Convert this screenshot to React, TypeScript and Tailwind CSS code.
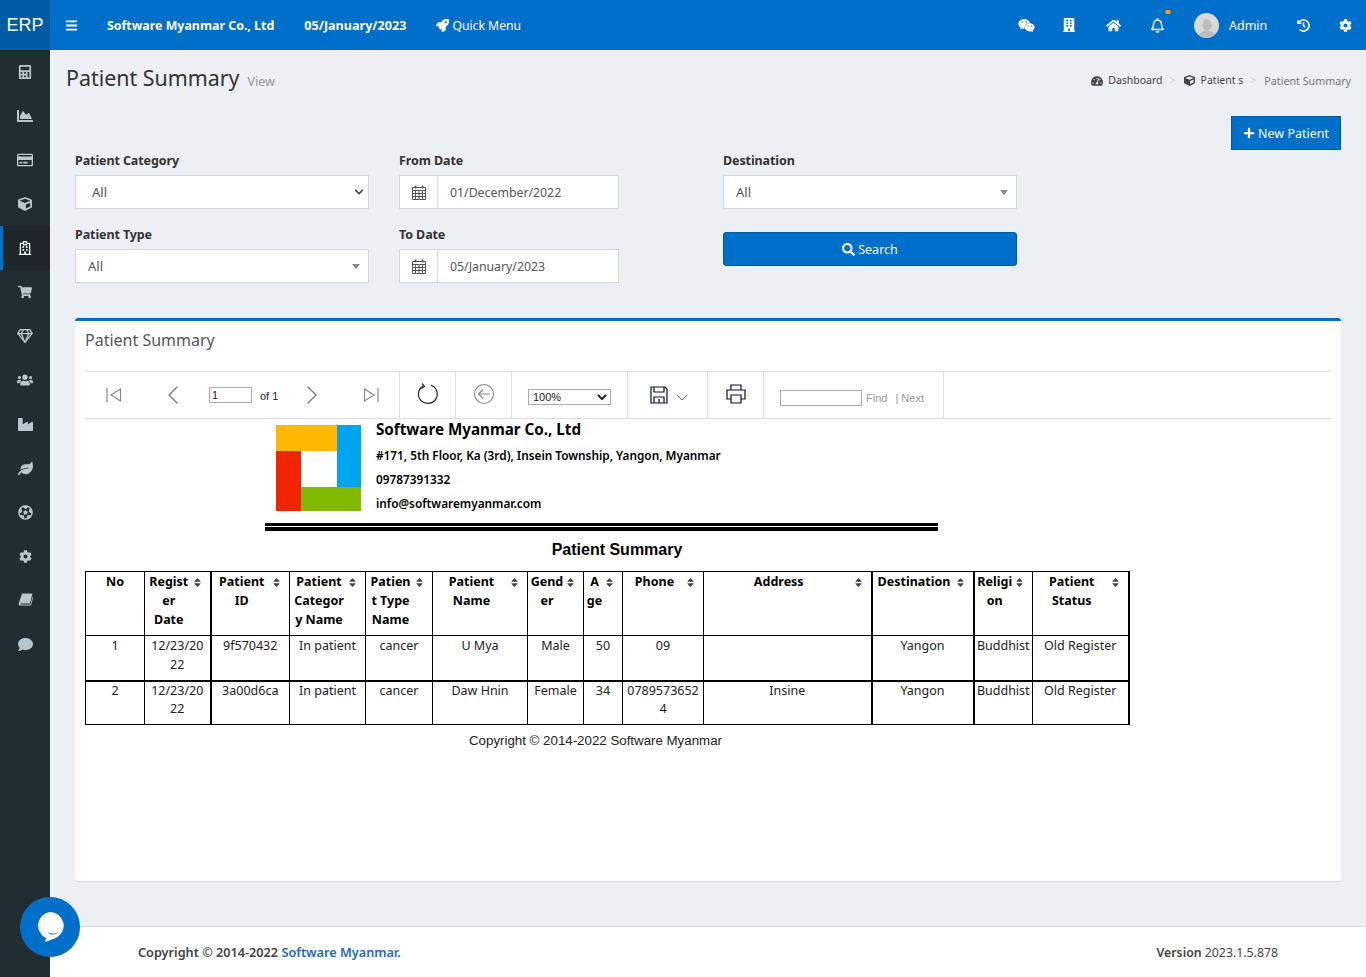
import {
  FaBars,
  FaBuilding,
  FaCalculator,
  FaChartArea,
  FaChevronDown,
  FaCog,
  FaComment,
  FaCube,
  FaFutbol,
  FaHistory,
  FaHome,
  FaIndustry,
  FaLeaf,
  FaPlus,
  FaRegBell,
  FaRegCreditCard,
  FaRegGem,
  FaRegHospital,
  FaRocket,
  FaSearch,
  FaShoppingCart,
  FaSort,
  FaTachometerAlt,
  FaUsers,
  FaWeixin,
} from "react-icons/fa";
import type { ReactNode } from "react";

function BookIcon() {
  return (
    <svg width="15" height="14" viewBox="0 0 15 14" fill="currentColor">
      <path d="M4 0.500h10.500l-2.600 10H3c-.8 0-1 .9-.3 1h9.700l2-7.500.6.600-2 8H2.500C1 12.600.3 11.500.8 10.200z" />
    </svg>
  );
}

function CalendarIcon() {
  return (
    <svg width="14" height="15" viewBox="0 0 14 15" fill="none" stroke="#555" strokeWidth="1">
      <path d="M.5 2.500h13v12H.5zM.5 5.500h13M.5 8.500h13M.5 11.500h13M3.500 5.500v9M7 5.500v9M10.500 5.500v9" />
      <path d="M3.500 .5v3M10.500 .5v3" strokeWidth="1.600" />
    </svg>
  );
}

const sideIcons = [
  { icon: <FaCalculator size={14} /> },
  { icon: <FaChartArea size={16} /> },
  { icon: <FaRegCreditCard size={16} /> },
  { icon: <FaCube size={14} /> },
  { icon: <FaRegHospital size={14} />, active: true },
  { icon: <FaShoppingCart size={14} /> },
  { icon: <FaRegGem size={16} /> },
  { icon: <FaUsers size={16} /> },
  { icon: <FaIndustry size={15} /> },
  { icon: <FaLeaf size={15} /> },
  { icon: <FaFutbol size={15} /> },
  { icon: <FaCog size={13} /> },
  { icon: <BookIcon /> },
  { icon: <FaComment size={15} /> },
];

const headers = [
  { lines: ["No"], sort: false },
  { lines: ["Regist", "er", "Date"], sort: true },
  { lines: ["Patient", "ID"], sort: true },
  { lines: ["Patient", "Categor", "y Name"], sort: true },
  { lines: ["Patien", "t Type", "Name"], sort: true },
  { lines: ["Patient", "Name"], sort: true },
  { lines: ["Gend", "er"], sort: true },
  { lines: ["A", "ge"], sort: true },
  { lines: ["Phone"], sort: true },
  { lines: ["Address"], sort: true },
  { lines: ["Destination"], sort: true },
  { lines: ["Religi", "on"], sort: true },
  { lines: ["Patient", "Status"], sort: true },
];

const rows = [
  ["1", "12/23/20 22", "9f570432", "In patient", "cancer", "U Mya", "Male", "50", "09", "", "Yangon", "Buddhist", "Old Register"],
  ["2", "12/23/20 22", "3a00d6ca", "In patient", "cancer", "Daw Hnin", "Female", "34", "0789573652 4", "Insine", "Yangon", "Buddhist", "Old Register"],
];

// thick right edge on these columns, same as the report output
const thick = [1, 9, 10, 12];

function FieldLabel({ children }: { children: ReactNode }) {
  return <div className="h-5 text-[12.5px] leading-[22px] font-bold tracking-[-0.1px] text-[#333]">{children}</div>;
}

function SelectField({ pad, caret }: { pad: string; caret: "chevron" | "triangle" }) {
  return (
    <div className="relative mt-[5px] h-[34px]">
      <select className={`h-full w-full appearance-none border border-[#d2d6de] bg-white pt-[1px] text-[13px] text-[#555] outline-none ${pad}`}>
        <option>All</option>
      </select>
      {caret === "chevron" ? (
        <FaChevronDown size={10} className="absolute top-[12px] right-[5px] text-[#444]" />
      ) : (
        <span className="absolute top-[15px] right-[9px] h-0 w-0 border-x-[4px] border-t-[5px] border-x-transparent border-t-[#888]" />
      )}
    </div>
  );
}

function DateField({ value }: { value: string }) {
  return (
    <div className="mt-[5px] flex h-[34px] border border-[#d2d6de] bg-white">
      <div className="flex w-[38px] items-center justify-center border-r border-[#d2d6de]">
        <CalendarIcon />
      </div>
      <input readOnly value={value} className="min-w-0 flex-1 pt-[2px] pl-3 text-[12.3px] text-[#555] outline-none" />
    </div>
  );
}

function ToolCell({ width, children }: { width: string; children: ReactNode }) {
  return <div className={`flex h-full shrink-0 items-center border-r border-[#ddd] ${width}`}>{children}</div>;
}

function ReportLogo() {
  return (
    <svg width="85" height="86" viewBox="0 0 85 86" className="mt-[6px] shrink-0">
      <rect x="0" y="0" width="61" height="26" fill="#ffb900" />
      <rect x="61" y="0" width="24" height="62" fill="#00a4ef" />
      <rect x="0" y="26" width="25" height="60" fill="#f32300" />
      <rect x="25" y="62" width="60" height="24" fill="#7fba00" />
    </svg>
  );
}

export default function App() {
  return (
    <div className="flex h-[977px] w-[1366px] flex-col overflow-hidden bg-[#eceff4] [font-family:Noto_Sans,sans-serif]">
      {/* Top bar */}
      <header className="flex h-[50px] shrink-0 items-center bg-[#006fca] text-white">
        <div className="flex h-[50px] w-[50px] items-center justify-center bg-[#005ba5] [font-family:Liberation_Sans,Arial,sans-serif] text-[18px]">
          ERP
        </div>
        <FaBars size={13} className="ml-[15px]" />
        <span className="mt-[2px] ml-[29px] text-[12.4px] font-bold">Software Myanmar Co., Ltd</span>
        <span className="mt-[2px] ml-[30px] text-[12.6px] font-bold">05/January/2023</span>
        <FaRocket size={13} className="ml-[30px]" />
        <span className="mt-[2px] ml-[3px] text-[12.2px]">Quick Menu</span>
        <div className="ml-auto flex items-center">
          <FaWeixin size={17} />
          <FaBuilding size={14} className="ml-[27px]" />
          <FaHome size={15} className="ml-[30px]" />
          <div className="relative ml-[29px]">
            <FaRegBell size={15} />
            <span className="absolute -top-[8px] left-[15px] h-[4px] w-[6px] rounded-full bg-[#f39c12]" />
          </div>
          <div className="ml-[29px] flex h-[25px] w-[25px] items-end justify-center overflow-hidden rounded-full bg-[#d9d9d9]">
            <svg width="18" height="20" viewBox="0 0 18 20" fill="#bdbdbd">
              <ellipse cx="9" cy="7" rx="4.500" ry="6" />
              <path d="M0 20c0-5 4-6 6-7h6c2 1 6 2 6 7z" />
            </svg>
          </div>
          <span className="mt-[2px] ml-[10px] w-[38px] text-[12.5px]">Admin</span>
          <FaHistory size={13} className="ml-[30px]" />
          <FaCog size={13} className="mr-[14px] ml-[29px]" />
        </div>
      </header>

      <div className="flex min-h-0 flex-1">
        {/* Sidebar */}
        <aside className="w-[50px] shrink-0 bg-[#222d32]">
          {sideIcons.map((item, i) => (
            <div
              key={i}
              className={`flex h-[44px] items-center justify-center border-l-[3px] pr-[3px] ${
                item.active ? "border-[#006fca] bg-[#1e282c] text-white" : "border-transparent text-[#b8c7ce]"
              }`}
            >
              {item.icon}
            </div>
          ))}
        </aside>

        <div className="relative flex min-w-0 flex-1 flex-col">
          <main className="flex min-h-0 flex-1 flex-col">
            {/* Page title and breadcrumb */}
            <div className="flex h-[42px] items-end justify-between pr-[15px] pl-4">
              <div className="flex items-baseline">
                <h1 className="text-[21.4px] leading-7 text-[#333]">Patient Summary</h1>
                <span className="ml-2 text-[12.5px] text-[#999]">View</span>
              </div>
              <div className="mb-[3px] flex items-center text-[10.5px] text-[#444]">
                <FaTachometerAlt size={12} />
                <span className="ml-[5px]">Dashboard</span>
                <span className="mx-[7px] text-[#ccc]">&gt;</span>
                <FaCube size={11} className="ml-[1px]" />
                <span className="ml-[6px]">Patient s</span>
                <span className="mx-[7px] text-[#ccc]">&gt;</span>
                <span className="ml-[1px] text-[10.7px] text-[#777]">Patient Summary</span>
              </div>
            </div>

            <div className="mt-[24px] flex justify-end pr-[25px]">
              <button className="flex h-[34px] w-[110px] items-center justify-center gap-[3px] border border-[#005ba5] bg-[#006fca] pt-[2px] text-[12.5px] text-white">
                <FaPlus size={12} className="-mt-[2px]" />
                New Patient
              </button>
            </div>

            {/* Filters */}
            <div className="flex px-[25px]">
              <div className="w-[294px]">
                <FieldLabel>Patient Category</FieldLabel>
                <SelectField pad="pl-4" caret="chevron" />
                <div className="mt-[15px]">
                  <FieldLabel>Patient Type</FieldLabel>
                  <SelectField pad="pl-3" caret="triangle" />
                </div>
              </div>
              <div className="ml-[30px] w-[220px]">
                <FieldLabel>From Date</FieldLabel>
                <DateField value="01/December/2022" />
                <div className="mt-[15px]">
                  <FieldLabel>To Date</FieldLabel>
                  <DateField value="05/January/2023" />
                </div>
              </div>
              <div className="ml-[104px] w-[294px]">
                <FieldLabel>Destination</FieldLabel>
                <SelectField pad="pl-3" caret="triangle" />
                <button className="mt-[23px] flex h-[34px] w-full items-center justify-center gap-[3px] rounded-[3px] border border-[#005ba5] bg-[#006fca] pt-[2px] text-[12.5px] text-white">
                  <FaSearch size={13} className="-mt-[2px]" />
                  Search
                </button>
              </div>
            </div>

            {/* Report card */}
            <section className="mx-[25px] mt-[35px] h-[563px] rounded-[3px] border-t-[3px] border-[#006fca] bg-white px-[10px] shadow-[0_1px_1px_rgba(0,0,0,0.1)]">
              <div className="h-[50px] pt-[7px] text-[16px] leading-6 text-[#555]">Patient Summary</div>

              {/* Viewer toolbar */}
              <div className="flex h-[48px] items-center border-y border-[#ddd] [font-family:Liberation_Sans,Arial,sans-serif]">
                <ToolCell width="w-[315px]">
                  <svg width="16" height="16" viewBox="0 0 16 16" fill="none" stroke="#888" strokeWidth="1.2" className="ml-[21px]">
                    <path d="M1 1v14M14.500 2L5 8l9.500 6z" />
                  </svg>
                  <svg width="12" height="20" viewBox="0 0 12 20" fill="none" stroke="#777" strokeWidth="1.3" className="ml-[45px]">
                    <path d="M10.500 1.500L2 10l8.500 8.500" />
                  </svg>
                  <input readOnly value="1" className="ml-[30px] h-[16px] w-[43px] border border-[#aaa] pl-[2px] text-[11px] text-[#600]" />
                  <span className="mt-[3px] ml-[8px] w-[19px] text-[11px] whitespace-nowrap text-[#222]">of 1</span>
                  <svg width="12" height="20" viewBox="0 0 12 20" fill="none" stroke="#777" strokeWidth="1.3" className="ml-[27px]">
                    <path d="M1.500 1.500L10 10l-8.500 8.500" />
                  </svg>
                  <svg width="16" height="16" viewBox="0 0 16 16" fill="none" stroke="#888" strokeWidth="1.2" className="ml-[45px]">
                    <path d="M15 1v14M1.500 2L11 8l-9.500 6z" />
                  </svg>
                </ToolCell>
                <ToolCell width="w-[56px] justify-center">
                  <svg width="22" height="22" viewBox="0 0 22 22" fill="none" stroke="#222" strokeWidth="1.2" className="-mt-[2px]">
                    <path d="M14 2.200A9.400 9.400 0 1 1 6 3" />
                    <path d="M5 0.500L7.500 3.500 4 5.500" />
                  </svg>
                </ToolCell>
                <ToolCell width="w-[56px] justify-center">
                  <svg width="22" height="22" viewBox="0 0 22 22" fill="none" stroke="#888" strokeWidth="1.1" className="-mt-[2px]">
                    <circle cx="11" cy="11" r="9.500" />
                    <path d="M17 11H5.500M10 6.500L5.500 11l4.500 4.500" />
                  </svg>
                </ToolCell>
                <ToolCell width="w-[116px] pl-4">
                  <select className="mt-[4px] h-[16px] w-[83px] border border-[#aaa] text-[11px] text-[#222]">
                    <option>100%</option>
                  </select>
                </ToolCell>
                <ToolCell width="w-[80px]">
                  <svg width="18" height="18" viewBox="0 0 18 18" fill="none" stroke="#0a1030" strokeWidth="1.2" className="ml-[22px]">
                    <path d="M1 1h14l2 2v14H1z" />
                    <path d="M4 1v5h10V1M4 17v-6h10v6M9 13v4" />
                  </svg>
                  <svg width="12" height="7" viewBox="0 0 12 7" fill="none" stroke="#666" strokeWidth="1" className="mt-[5px] ml-[8px]">
                    <path d="M1 1l5 5 5-5" />
                  </svg>
                </ToolCell>
                <ToolCell width="w-[56px] justify-center">
                  <svg width="20" height="20" viewBox="0 0 20 20" fill="none" stroke="#0a1030" strokeWidth="1.2" className="-mt-[2px]">
                    <path d="M5 6V1h10v5M5 15H1V6h18v9h-4" />
                    <path d="M5 11h10v8H5z" />
                  </svg>
                </ToolCell>
                <ToolCell width="w-[180px] pl-4">
                  <input readOnly className="mt-[6px] h-[16px] w-[82px] border border-[#aaa]" />
                  <span className="mt-[6px] ml-[4px] text-[11px] text-[#999]">Find</span>
                  <span className="mt-[6px] ml-[8px] text-[11px] text-[#999]">| Next</span>
                </ToolCell>
              </div>

              {/* Report output */}
              <div className="flex h-[96px] pl-[191px] text-black">
                <ReportLogo />
                <div className="ml-[15px]">
                  <div className="h-5 text-[15.2px] leading-5 font-bold">Software Myanmar Co., Ltd</div>
                  <div className="mt-1 h-6 text-[11.8px] leading-6 font-semibold">#171, 5th Floor, Ka (3rd), Insein Township, Yangon, Myanmar</div>
                  <div className="h-6 text-[11.8px] leading-6 font-semibold">09787391332</div>
                  <div className="h-6 text-[11.8px] leading-6 font-semibold">info@softwaremyanmar.com</div>
                </div>
              </div>
              <div className="mt-[8px] ml-[180px] h-[8px] w-[673px] border-t-[3px] border-b-[4px] border-black" />
              <div className="mt-[10px] w-[1064px] text-center [font-family:Liberation_Sans,Arial,sans-serif] text-[16px] leading-[18px] font-bold text-black">
                Patient Summary
              </div>

              <table className="mt-[12px] w-[1043px] table-fixed border-collapse text-[12.5px] text-[#222]">
                <colgroup>
                  <col className="w-[59px]" />
                  <col className="w-[66px]" />
                  <col className="w-[79px]" />
                  <col className="w-[76px]" />
                  <col className="w-[67px]" />
                  <col className="w-[95px]" />
                  <col className="w-[56px]" />
                  <col className="w-[39px]" />
                  <col className="w-[81px]" />
                  <col className="w-[168px]" />
                  <col className="w-[102px]" />
                  <col className="w-[59px]" />
                  <col className="w-[96px]" />
                </colgroup>
                <thead>
                  <tr className="h-[64px]">
                    {headers.map((h, i) => (
                      <th
                        key={i}
                        className={`relative border border-black pt-0 align-top leading-[19px] font-bold text-black ${h.sort ? "pr-[17px]" : ""} ${thick.includes(i) ? "border-r-2" : ""}`}
                      >
                        {h.lines.map((line) => (
                          <div key={line} className="whitespace-nowrap">
                            {line}
                          </div>
                        ))}
                        {h.sort && <FaSort size={11} className="absolute top-[5px] right-[7px] text-[#444]" />}
                      </th>
                    ))}
                  </tr>
                </thead>
                <tbody>
                  {rows.map((row, r) => (
                    <tr key={r} className={r === 0 ? "h-[45px]" : "h-[44px]"}>
                      {row.map((cell, i) => (
                        <td
                          key={i}
                          className={`border border-black text-center align-top leading-[18.5px] ${r === 0 ? "border-b-2 pt-[1px]" : ""} ${thick.includes(i) ? "border-r-2" : ""}`}
                        >
                          {cell.split(" ").length === 2 && (i === 1 || i === 8) ? (
                            cell.split(" ").map((part) => <div key={part}>{part}</div>)
                          ) : (
                            <div className="whitespace-nowrap">{cell}</div>
                          )}
                        </td>
                      ))}
                    </tr>
                  ))}
                </tbody>
              </table>
              <div className="mt-[8px] ml-[384px] [font-family:Liberation_Sans,Arial,sans-serif] text-[13.3px] leading-4 text-[#222]">
                Copyright © 2014-2022 Software Myanmar
              </div>
            </section>
          </main>

          <footer className="flex h-[51px] shrink-0 items-center justify-between border-t border-[#d2d6de] bg-white px-[88px] pt-[2px] text-[#444]">
            <div className="text-[12.7px] font-semibold">
              Copyright © 2014-2022 <span className="text-[#1b6ac9]">Software Myanmar.</span>
            </div>
            <div className="text-[12.3px]">
              <span className="font-semibold">Version</span> 2023.1.5.878
            </div>
          </footer>

          {/* Floating chat */}
          <button className="absolute bottom-[20px] -left-[30px] flex h-[60px] w-[60px] items-center justify-center rounded-full bg-[#006fca]">
            <svg width="30" height="32" viewBox="0 0 30 32">
              <path d="M15 1a13.700 13.700 0 0 1 6 26L10 31l1-4A13.700 13.700 0 0 1 15 1z" fill="#fff" />
              <path d="M13 21.500c3 1.500 7 1.500 10-.5-1 3-8 3.500-10 .5z" fill="#006fca" />
            </svg>
          </button>
        </div>
      </div>
    </div>
  );
}
